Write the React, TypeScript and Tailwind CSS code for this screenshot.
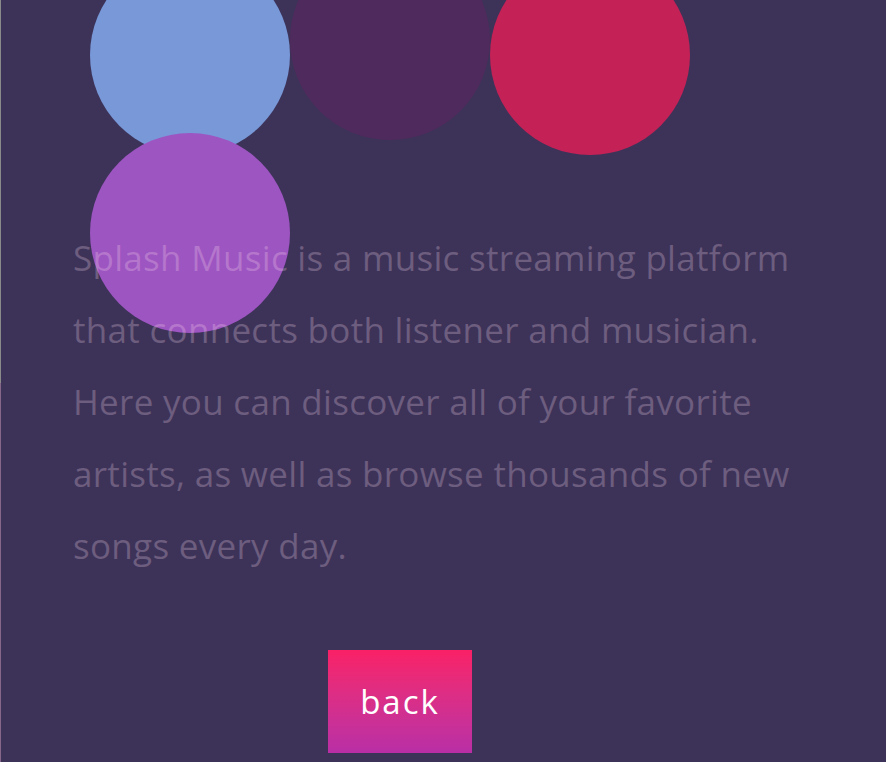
import React from "react";

export default function App() {
  return (
    <div className="relative w-[886px] h-[762px] overflow-hidden bg-[#3d3359]">
      {/* left edge line */}
      <div className="absolute left-0 top-0 w-[1px] h-[383px] bg-[#8a8a8a]" />
      <div className="absolute left-0 top-[383px] w-[1px] h-[379px] bg-[#86668a]" />

      {/* bouncing circles */}
      <div className="absolute left-[90px] top-[-45px] w-[600px] flex flex-wrap">
        <div className="w-[200px] h-[200px] rounded-full bg-[#7898d8]" />
        <div className="w-[200px] h-[200px] rounded-full bg-[#4f2a5c] -translate-y-[15px]" />
        <div className="w-[200px] h-[200px] rounded-full bg-[#c42157]" />
        <div className="w-[200px] h-[200px] rounded-full bg-[#9d55c1] -translate-y-[22px]" />
      </div>

      <div className="relative pt-[222px] pl-[73px]">
        <p
          className="whitespace-nowrap text-[35px] font-medium tracking-[0.3px] leading-[72px] text-[rgba(255,222,240,0.25)]"
          style={{ fontFamily: "'Open Sans', 'Noto Sans', sans-serif" }}
        >
          Splash Music is a music streaming platform
          <br />
          that connects both listener and musician.
          <br />
          Here you can discover all of your favorite
          <br />
          artists, as well as browse thousands of new
          <br />
          songs every day.
        </p>
        <div className="pl-[255px] pt-[68px]">
          <button
            className="w-[144px] h-[103px] bg-gradient-to-b from-[#f91f66] to-[#b92ea6] text-white text-[33px] tracking-[2px]"
            style={{ fontFamily: "'Open Sans', 'Noto Sans', sans-serif" }}
          >
            back
          </button>
        </div>
      </div>
    </div>
  );
}
